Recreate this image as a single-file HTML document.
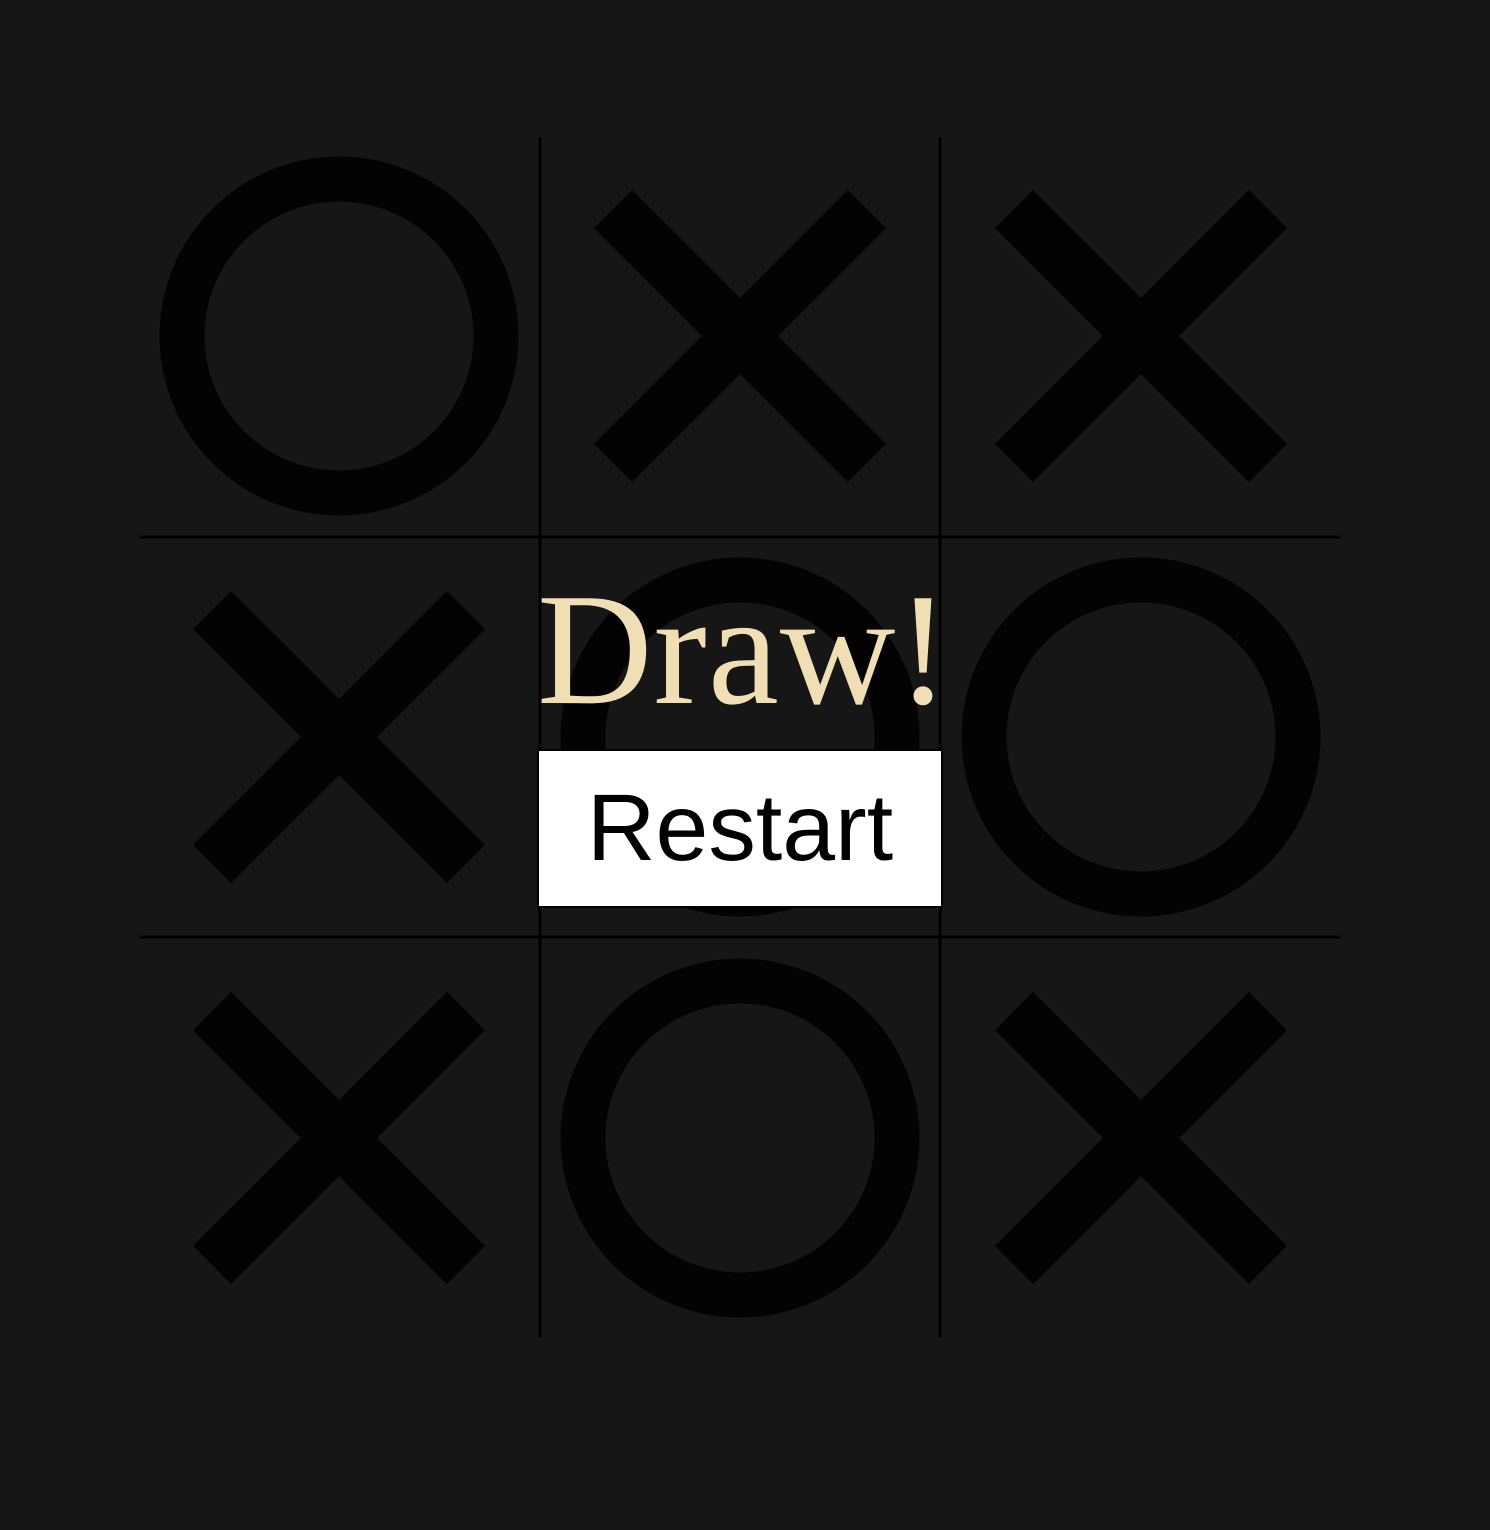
<!DOCTYPE html>
<html><head><meta charset="utf-8"><style>
html,body{margin:0;padding:0;background:#161616;width:1490px;height:1530px;overflow:hidden}
svg{position:absolute;left:0;top:0}
.t{position:absolute;left:537px;top:559px;font-family:"Liberation Serif",serif;font-size:160px;line-height:180px;color:#f0deb5;white-space:nowrap;letter-spacing:1px}
.b{position:absolute;left:537px;top:749px;width:402px;height:155px;background:#fff;border:2px solid #000;font-family:"Liberation Sans",sans-serif;font-size:95px;line-height:155px;text-align:center;color:#000}
</style></head><body>
<svg width="1490" height="1530">
<g stroke="#000" stroke-width="3">
<line x1="540" y1="137" x2="540" y2="1337"/>
<line x1="940" y1="137" x2="940" y2="1337"/>
<line x1="140" y1="537" x2="1340" y2="537"/>
<line x1="140" y1="937" x2="1340" y2="937"/>
</g>
<g fill="none" stroke="#030303" stroke-width="45">
<circle cx="339" cy="336" r="157"/>
<circle cx="740" cy="737" r="157"/>
<circle cx="1141" cy="737" r="157"/>
<circle cx="740" cy="1138" r="157"/>
</g>
<g stroke="#030303" stroke-width="54">
<path d="M613 209L867 463M867 209L613 463"/>
<path d="M1014 209L1268 463M1268 209L1014 463"/>
<path d="M212 610L466 864M466 610L212 864"/>
<path d="M212 1011L466 1265M466 1011L212 1265"/>
<path d="M1014 1011L1268 1265M1268 1011L1014 1265"/>
</g>
</svg>
<div class="t">Draw!</div>
<div class="b">Restart</div>
</body></html>
